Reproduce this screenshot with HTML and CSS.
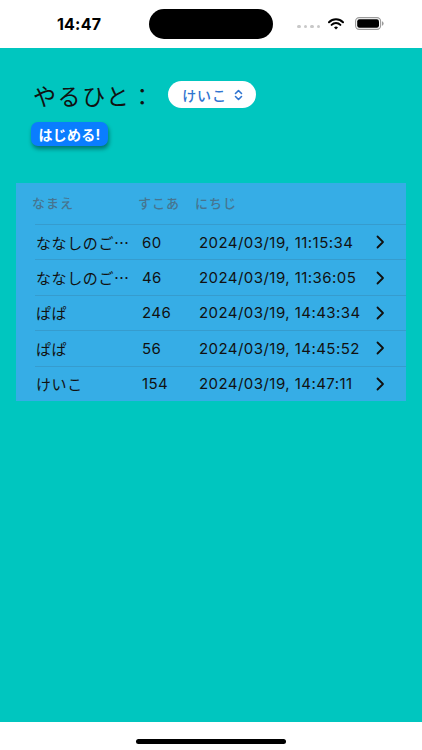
FILE: index.html
```html
<!DOCTYPE html>
<html lang="ja">
<head>
<meta charset="utf-8">
<link rel="stylesheet" href="styles.css">
</head>
<body>
<div class="screen">
  <header class="status">
    <div class="time">14:47</div>
    <div class="island"></div>
    <div class="status-right">
      <div class="dots"><span></span><span></span><span></span><span></span></div>
      <svg class="wifi" width="16" height="12" viewBox="0 0 16 12">
        <path d="M1 4.2 A10 10 0 0 1 15 4.2" fill="none" stroke="#000" stroke-width="2" stroke-linecap="round"/>
        <path d="M3.6 6.9 A6.2 6.2 0 0 1 12.4 6.9" fill="none" stroke="#000" stroke-width="2" stroke-linecap="round"/>
        <path d="M6 9.6 L8 11.5 L10 9.6 A2.8 2.8 0 0 0 6 9.6 Z" fill="#000"/>
      </svg>
      <svg class="battery" width="29" height="13" viewBox="0 0 29 13">
        <rect x="0.6" y="0.6" width="25" height="11.8" rx="3.6" fill="none" stroke="#9a9a9a" stroke-width="1.1"/>
        <rect x="2.2" y="2.2" width="21.8" height="8.6" rx="2.2" fill="#000"/>
        <path d="M27 4.3 Q28.6 4.6 28.6 6.5 Q28.6 8.4 27 8.7 Z" fill="#9a9a9a"/>
      </svg>
    </div>
  </header>

  <main class="main">
    <div class="player-row">
      <span class="player-label">やるひと：</span>
      <button class="picker">
        <span>けいこ</span>
        <svg width="9" height="12" viewBox="0 0 9 12">
          <path d="M1.5 4.5 L4.5 1.5 L7.5 4.5 M1.5 7.5 L4.5 10.5 L7.5 7.5" fill="none" stroke="#2f74d0" stroke-width="1.6" stroke-linecap="round" stroke-linejoin="round"/>
        </svg>
      </button>
    </div>
    <button class="start">はじめる!</button>

    <section class="table">
      <div class="thead">
        <span class="c-name">なまえ</span>
        <span class="c-score">すこあ</span>
        <span class="c-date">にちじ</span>
      </div>
      <div class="row">
        <span class="c-name">ななしのご…</span><span class="c-score">60</span><span class="c-date">2024/03/19, 11:15:34</span>
        <svg class="chev" width="9" height="14" viewBox="0 0 9 14"><path d="M1.5 1.5 L7 7 L1.5 12.5" fill="none" stroke="#111" stroke-width="1.8" stroke-linecap="round" stroke-linejoin="round"/></svg>
      </div>
      <div class="row">
        <span class="c-name">ななしのご…</span><span class="c-score">46</span><span class="c-date">2024/03/19, 11:36:05</span>
        <svg class="chev" width="9" height="14" viewBox="0 0 9 14"><path d="M1.5 1.5 L7 7 L1.5 12.5" fill="none" stroke="#111" stroke-width="1.8" stroke-linecap="round" stroke-linejoin="round"/></svg>
      </div>
      <div class="row">
        <span class="c-name">ぱぱ</span><span class="c-score">246</span><span class="c-date">2024/03/19, 14:43:34</span>
        <svg class="chev" width="9" height="14" viewBox="0 0 9 14"><path d="M1.5 1.5 L7 7 L1.5 12.5" fill="none" stroke="#111" stroke-width="1.8" stroke-linecap="round" stroke-linejoin="round"/></svg>
      </div>
      <div class="row">
        <span class="c-name">ぱぱ</span><span class="c-score">56</span><span class="c-date">2024/03/19, 14:45:52</span>
        <svg class="chev" width="9" height="14" viewBox="0 0 9 14"><path d="M1.5 1.5 L7 7 L1.5 12.5" fill="none" stroke="#111" stroke-width="1.8" stroke-linecap="round" stroke-linejoin="round"/></svg>
      </div>
      <div class="row">
        <span class="c-name">けいこ</span><span class="c-score">154</span><span class="c-date">2024/03/19, 14:47:11</span>
        <svg class="chev" width="9" height="14" viewBox="0 0 9 14"><path d="M1.5 1.5 L7 7 L1.5 12.5" fill="none" stroke="#111" stroke-width="1.8" stroke-linecap="round" stroke-linejoin="round"/></svg>
      </div>
    </section>
  </main>

  <footer class="home">
    <div class="home-bar"></div>
  </footer>
</div>
</body>
</html>
```

FILE: styles.css
```css
* { box-sizing: border-box; }
html, body {
  margin: 0;
  padding: 0;
  width: 422px;
  height: 750px;
  overflow: hidden;
  background: #fff;
  font-family: "Inter", "Noto Sans CJK JP", sans-serif;
}
.screen {
  width: 422px;
  height: 750px;
  display: flex;
  flex-direction: column;
}
.status {
  height: 48px;
  flex: none;
  background: #fff;
  display: flex;
  align-items: center;
  position: relative;
}
.time {
  width: 160px;
  padding-left: 57px;
  font-size: 16px;
  font-weight: 700;
  letter-spacing: 0.2px;
  color: #000;
  margin-top: -1px;
}
.island {
  position: absolute;
  left: 149px;
  top: 9px;
  width: 124px;
  height: 30px;
  border-radius: 15px;
  background: #000;
}
.status-right {
  margin-left: auto;
  padding-right: 38px;
  display: flex;
  align-items: center;
  gap: 6px;
  margin-top: -1px;
}
.dots {
  display: flex;
  gap: 3px;
  margin-right: 2px;
  margin-top: 6px;
}
.dots span {
  width: 3.5px;
  height: 3.5px;
  border-radius: 50%;
  background: #c8c8c8;
}
.wifi { margin-right: 5px; }
.main {
  flex: 1;
  background: #00c6bf;
  padding: 33px 16px 0 16px;
  display: flex;
  flex-direction: column;
}
.player-row {
  display: flex;
  align-items: center;
  padding-left: 17px;
  height: 27px;
}
.player-label {
  font-family: "Noto Sans CJK JP", sans-serif;
  font-size: 23px;
  color: #111;
  letter-spacing: 1.6px;
}
.picker {
  margin-left: 13px;
  height: 27px;
  padding: 0 13px 0 14px;
  border: none;
  border-radius: 14px;
  background: #fff;
  display: flex;
  align-items: center;
  gap: 7px;
  font-family: "Noto Sans CJK JP", sans-serif;
  font-weight: 500;
  font-size: 14px;
  color: #2f74d0;
  letter-spacing: 0.8px;
}
.start {
  align-self: flex-start;
  margin-top: 14px;
  margin-left: 15px;
  height: 24px;
  width: 77px;
  padding: 0;
  border: none;
  border-radius: 7px;
  background: #0a7dff;
  color: #fff;
  font-family: inherit;
  font-weight: 700;
  font-size: 14px;
  letter-spacing: 0.3px;
  box-shadow: 1px 3px 4px rgba(0, 0, 0, 0.4);
}
.table {
  margin-top: 37px;
  width: 390px;
  background: #36ade6;
}
.thead {
  height: 41px;
  display: flex;
  align-items: center;
  padding-left: 16px;
  font-family: "Noto Sans CJK JP", sans-serif;
  font-size: 13px;
  font-weight: 500;
  color: #467590;
  letter-spacing: 1px;
  padding-bottom: 2px;
}
.thead .c-name { width: 106px; }
.thead .c-score { width: 57px; }
.row {
  height: 35.4px;
  margin-left: 19px;
  padding-left: 1px;
  border-top: 1px solid rgba(60, 60, 67, 0.14);
  display: flex;
  align-items: center;
  font-size: 15px;
  color: #111;
}
.row .c-name {
  width: 106px;
  font-family: "Noto Sans CJK JP", sans-serif;
  letter-spacing: 0.6px;
}
.row .c-score { width: 57px; letter-spacing: 0.4px; }
.row .c-date { flex: 1; letter-spacing: 0.45px; }
.chev { margin-right: 21px; }
.home {
  height: 28px;
  flex: none;
  background: #fff;
  display: flex;
  justify-content: center;
  padding-top: 17px;
}
.home-bar {
  width: 150px;
  height: 5px;
  border-radius: 3px;
  background: #000;
}
```
